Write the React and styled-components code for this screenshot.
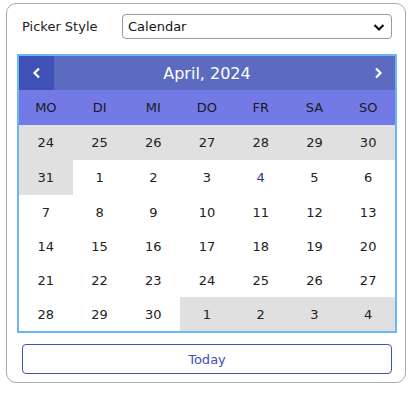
import React from "react";
import styled, { createGlobalStyle } from "styled-components";

const Global = createGlobalStyle`
  html, body { margin: 0; padding: 0; background: #fff; }
  body { font-family: "DejaVu Sans", Verdana, sans-serif; color: #222; }
`;

const Card = styled.div`
  box-sizing: border-box;
  margin: 3px 0 0 6px;
  width: 400px;
  height: 380px;
  border: 1px solid #a9a9a9;
  border-radius: 10px;
  padding: 10px 0 0 10px;
  display: flex;
  flex-direction: column;
`;

const Row = styled.div`
  display: flex;
  align-items: center;
  height: 25px;
  padding-left: 5px;
`;

const Label = styled.span`
  font-size: 13px;
  width: 100px;
  color: #222;
`;

const Select = styled.div`
  box-sizing: border-box;
  width: 270px;
  height: 25px;
  border: 1px solid #999;
  border-radius: 4px;
  display: flex;
  align-items: center;
  justify-content: space-between;
  padding: 0 6px 0 5px;
  font-size: 13px;
  color: #111;
`;

const Calendar = styled.div`
  box-sizing: border-box;
  margin-top: 15px;
  width: 380px;
  border: 2px solid #6ab7f2;
  display: flex;
  flex-direction: column;
`;

const Header = styled.div`
  display: flex;
  align-items: stretch;
  height: 34px;
  background: #5c6bc0;
`;

const NavButton = styled.div`
  width: 35px;
  display: flex;
  align-items: center;
  justify-content: center;
  background: ${(p) => (p.$active ? "#3f51b5" : "transparent")};
`;

const Title = styled.div`
  flex: 1;
  display: flex;
  align-items: center;
  justify-content: center;
  color: #fff;
  font-size: 16px;
`;

const Grid = styled.div`
  display: grid;
  grid-template-columns: repeat(7, 1fr);
`;

const WeekDay = styled.div`
  height: 35px;
  display: flex;
  align-items: center;
  justify-content: center;
  background: #737ae6;
  font-size: 13px;
  color: #1a1a1a;
`;

const Day = styled.div`
  height: ${(p) => p.$h}px;
  display: flex;
  align-items: center;
  justify-content: center;
  font-size: 13px;
  background: ${(p) => (p.$other ? "#e0e0e0" : "#fff")};
  color: ${(p) => (p.$today ? "#2b3390" : "#222")};
`;

const TodayButton = styled.div`
  box-sizing: border-box;
  margin: 11px 0 0 5px;
  width: 370px;
  height: 30px;
  border: 1px solid #3f51b5;
  border-radius: 4px;
  display: flex;
  align-items: center;
  justify-content: center;
  color: #3f51b5;
  font-size: 13px;
`;

const Chevron = ({ dir = "left", color = "#fff", size = 12 }) => (
  <svg width={size} height={size} viewBox="0 0 12 12">
    <path
      d={dir === "left" ? "M8 1.5 L3.5 6 L8 10.5" : dir === "right" ? "M4 1.5 L8.5 6 L4 10.5" : "M1.5 4 L6 8.5 L10.5 4"}
      fill="none"
      stroke={color}
      strokeWidth="2.2"
      strokeLinecap="butt"
      strokeLinejoin="miter"
    />
  </svg>
);

const weekdays = ["MO", "DI", "MI", "DO", "FR", "SA", "SO"];

const days = [
  ...[24, 25, 26, 27, 28, 29, 30, 31].map((d) => ({ d, other: true })),
  ...Array.from({ length: 30 }, (_, i) => ({ d: i + 1, other: false, today: i + 1 === 4 })),
  ...[1, 2, 3, 4].map((d) => ({ d, other: true })),
];

const rowHeights = [35, 35, 34, 34, 34, 34];

export default function App() {
  return (
    <>
      <Global />
      <Card>
        <Row>
          <Label>Picker Style</Label>
          <Select>
            <span>Calendar</span>
            <Chevron dir="down" color="#111" size={12} />
          </Select>
        </Row>
        <Calendar>
          <Header>
            <NavButton $active>
              <Chevron dir="left" />
            </NavButton>
            <Title>April, 2024</Title>
            <NavButton>
              <Chevron dir="right" />
            </NavButton>
          </Header>
          <Grid>
            {weekdays.map((w) => (
              <WeekDay key={w}>{w}</WeekDay>
            ))}
            {days.map((x, i) => (
              <Day key={i} $other={x.other} $today={x.today} $h={rowHeights[Math.floor(i / 7)]}>
                {x.d}
              </Day>
            ))}
          </Grid>
        </Calendar>
        <TodayButton>Today</TodayButton>
      </Card>
    </>
  );
}
